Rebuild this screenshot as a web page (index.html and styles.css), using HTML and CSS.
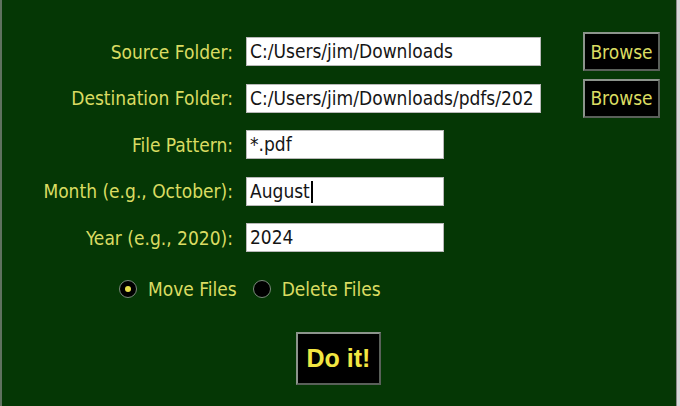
FILE: index.html
```html
<!DOCTYPE html>
<html lang="en">
<head>
  <meta charset="UTF-8">
  <meta name="viewport" content="width=device-width, initial-scale=1.0">
  <title>Monthly File Mover</title>
  <link rel="stylesheet" href="styles.css">
</head>
<body>
  <div class="window">
    <div class="panel">
      <!-- Folder and filter fields -->
      <div class="form-grid">
        <label class="label">Source Folder:</label>
        <div class="entry entry-wide">C:/Users/jim/Downloads</div>
        <button class="btn browse">Browse</button>

        <label class="label">Destination Folder:</label>
        <div class="entry entry-wide">C:/Users/jim/Downloads/pdfs/202</div>
        <button class="btn browse">Browse</button>

        <label class="label">File Pattern:</label>
        <div class="entry entry-short">*.pdf</div>
        <span></span>

        <label class="label">Month (e.g., October):</label>
        <div class="entry entry-short">August<span class="caret"></span></div>
        <span></span>

        <label class="label">Year (e.g., 2020):</label>
        <div class="entry entry-short">2024</div>
        <span></span>
      </div>

      <!-- Action choice -->
      <div class="radio-row">
        <div class="radio-item">
          <span class="radio checked"></span>
          <span class="radio-text">Move Files</span>
        </div>
        <div class="radio-item">
          <span class="radio"></span>
          <span class="radio-text">Delete Files</span>
        </div>
      </div>

      <div class="action-row">
        <button class="btn do-it">Do it!</button>
      </div>
    </div>
    <div class="edge"></div>
  </div>
</body>
</html>
```

FILE: styles.css
```css
/* Page and window frame */
html, body {
  margin: 0;
  padding: 0;
  width: 100%;
  height: 100%;
  overflow: hidden;
}

body {
  font-family: "DejaVu Sans Condensed", "DejaVu Sans", sans-serif;
  font-size: 19px;
}

.window {
  display: flex;
  height: 100%;
  width: 100%;
  box-sizing: border-box;
  border-left: 2px solid #5f715f;
  background-color: #053705;
}

.panel {
  flex-grow: 1;
  display: flex;
  flex-direction: column;
  padding-top: 32px;
}

/* Strip along the right side of the window */
.edge {
  width: 3px;
  border-left: 1px solid #8a8a8a;
  background-color: #d8d8d8;
}

/* Form grid: labels, entries, buttons */
.form-grid {
  display: grid;
  grid-template-columns: 244px 337px 77px;
  grid-auto-rows: 39px;
  row-gap: 7.5px;
  align-items: center;
}

.label {
  color: #dadc62;
  text-align: right;
  padding-right: 13px;
  white-space: nowrap;
}

.entry {
  box-sizing: border-box;
  height: 29px;
  padding: 0 3px;
  background-color: #ffffff;
  border: 1px solid #b8b8b8;
  color: #151515;
  line-height: 27px;
  white-space: nowrap;
  overflow: hidden;
}

.entry-wide {
  width: 295px;
}

.entry-short {
  width: 198px;
}

/* Text cursor in the focused entry */
.caret {
  display: inline-block;
  width: 2px;
  height: 22px;
  margin-left: 1px;
  vertical-align: -5px;
  background-color: #000000;
}

/* Buttons */
.btn {
  font-family: inherit;
  background-color: #000000;
  color: #dadc62;
  border: 2px solid;
  border-color: #8c948c #5a605a #5a605a #8c948c;
  padding: 0;
  cursor: pointer;
}

.browse {
  width: 77px;
  height: 39px;
  font-size: 19px;
}

/* Radio buttons */
.radio-row {
  display: flex;
  gap: 16px;
  margin-top: 20px;
  padding-left: 117px;
  height: 24px;
  align-items: center;
}

.radio-item {
  display: flex;
  align-items: center;
  gap: 11px;
}

.radio {
  box-sizing: border-box;
  width: 18px;
  height: 18px;
  border-radius: 50%;
  border: 1px solid #7a8a7a;
  background-color: #000000;
  display: flex;
  justify-content: center;
  align-items: center;
}

.radio.checked::after {
  content: "";
  width: 6px;
  height: 6px;
  border-radius: 50%;
  background-color: #e8e04a;
}

.radio-text {
  color: #dadc62;
}

/* Main action button */
.action-row {
  display: flex;
  justify-content: center;
  margin-top: 31px;
  padding-right: 1px;
}

.do-it {
  width: 85px;
  height: 53px;
  font-family: "Liberation Sans", Arial, sans-serif;
  font-weight: bold;
  font-size: 25px;
  color: #f2e642;
}
```
